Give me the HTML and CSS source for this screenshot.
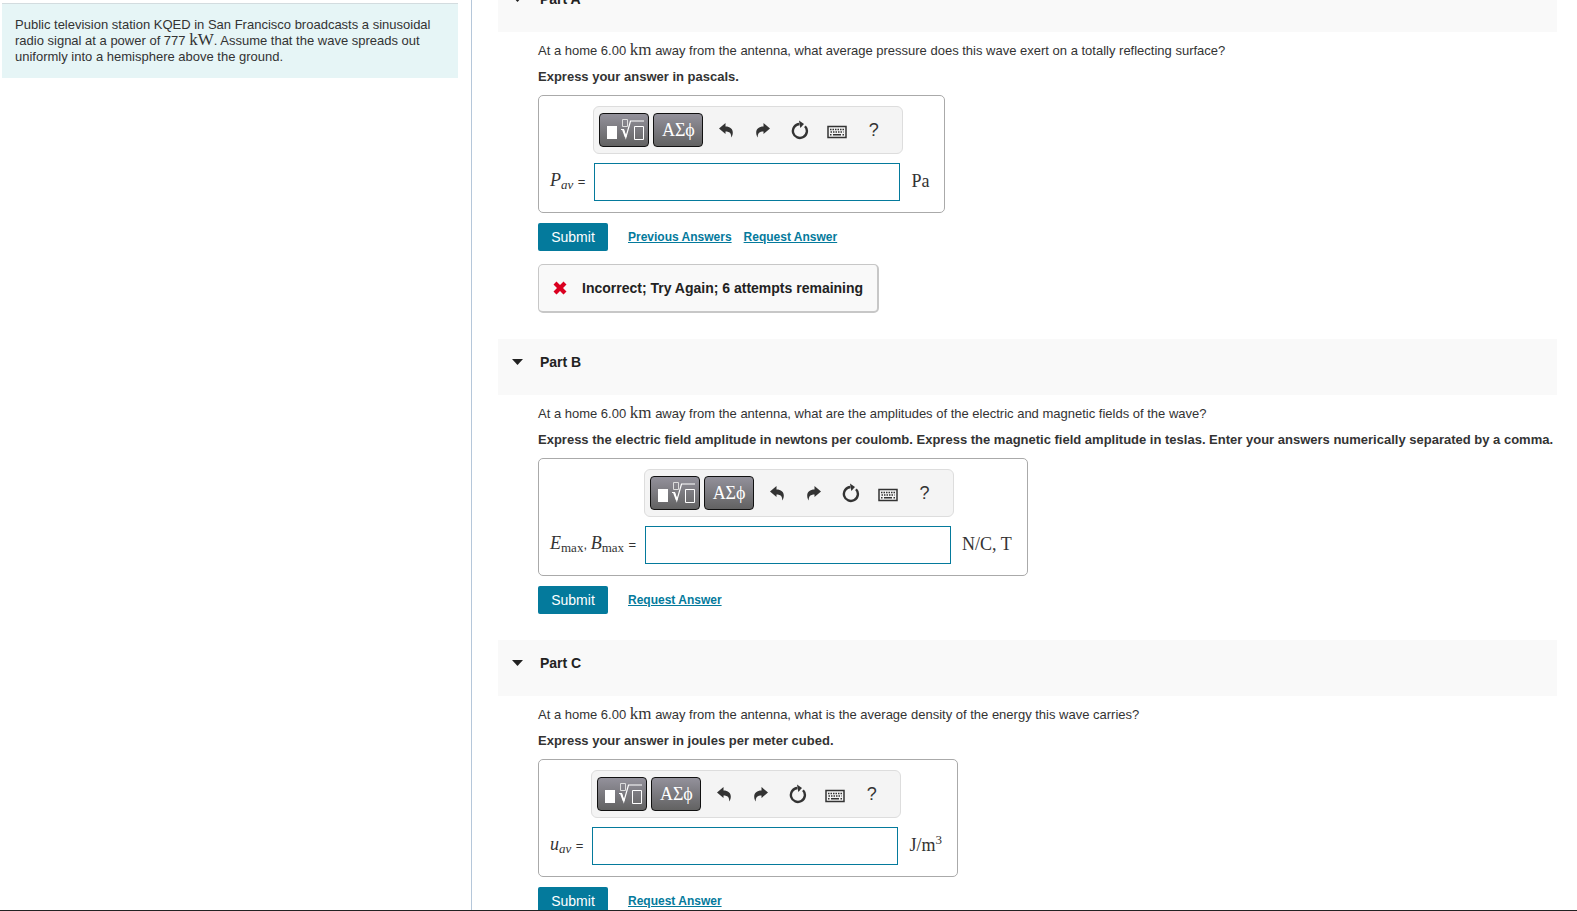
FILE: index.html
```
<!DOCTYPE html>
<html lang="en">
<head>
    <meta charset="UTF-8">
    <meta name="viewport" content="width=device-width, initial-scale=1.0">
    <title>Problem</title>
    <link rel="stylesheet" href="styles.css">
</head>
<body>
    <svg class="sprite" aria-hidden="true">
        <symbol id="icon-template" viewBox="0 0 40 26">
            <path fill="#fff" d="M3 9h10v13H3z"/>
            <path fill="none" stroke="#ddd" d="M18.500 2.500h5v7h-5z"/>
            <path fill="none" stroke="#fff" d="M30.500 9.500h9v13h-9z"/>
            <path fill="none" stroke="#fff" stroke-width="1.200" d="M17 12.500h2.500l2.300 8L26.500 4H40"/>
            <path fill="none" stroke="#fff" stroke-width="2" d="M19 12.500l2.800 7.500"/>
        </symbol>
        <symbol id="icon-undo" viewBox="0 0 16 16">
            <path d="M1 6.500L7.500 1v3.500c4.500 0 7.300 2.500 7.300 6 0 2-.6 3.700-1.600 5 .3-4-1.500-6-5.700-6V12z"/>
        </symbol>
        <symbol id="icon-redo" viewBox="0 0 16 16">
            <path d="M15 6.500L8.500 1v3.500c-4.500 0-7.300 2.500-7.300 6 0 2 .6 3.700 1.600 5-.3-4 1.500-6 5.700-6V12z"/>
        </symbol>
        <symbol id="icon-reset" viewBox="0 0 18 20">
            <path fill="none" stroke="currentColor" stroke-width="2.400" d="M14 6.200A7 7 0 1 1 8.500 4"/>
            <path d="M8 .500L13 4 9.300 8z"/>
        </symbol>
        <symbol id="icon-keyboard" viewBox="0 0 20 14">
            <path fill="none" stroke="currentColor" stroke-width="1.500" d="M1 1.500h18v11H1z"/>
            <path fill="none" stroke="currentColor" stroke-width="1.500" stroke-dasharray="1.500 1" d="M3 4.500h14M3.500 7h13"/>
            <path fill="none" stroke="currentColor" stroke-width="1.500" d="M3 9.800h1.500M6 9.800h8M15.500 9.800H17"/>
        </symbol>
        <symbol id="icon-cross" viewBox="0 0 14 14">
            <path d="M3.500.500L7 4 10.500.500l3 3L10 7l3.500 3.500-3 3L7 10l-3.500 3.500-3-3L4 7 .500 3.500z"/>
        </symbol>
        <symbol id="icon-caret" viewBox="0 0 11 6">
            <path d="M0 0h11L5.500 6z"/>
        </symbol>
    </svg>

    <div class="page">
        <aside class="intro">
            <p class="intro__text">Public television station KQED in San Francisco broadcasts a sinusoidal radio signal at a power of 777 <span class="math">kW</span>. Assume that the wave spreads out uniformly into a hemisphere above the ground.</p>
        </aside>

        <main class="parts">
            <section class="part">
                <h2 class="part__header"><svg class="part__caret"><use href="#icon-caret"/></svg>Part A</h2>
                <div class="part__body">
                    <p class="part__question">At a home 6.00 <span class="math">km</span> away from the antenna, what average pressure does this wave exert on a totally reflecting surface?</p>
                    <p class="part__hint">Express your answer in pascals.</p>
                    <div class="answer">
                        <div class="toolbar">
                            <button class="toolbar__menu" aria-label="Templates"><svg class="toolbar__template"><use href="#icon-template"/></svg></button>
                            <button class="toolbar__menu">ΑΣϕ</button>
                            <button class="toolbar__icon" aria-label="Undo"><svg width="16" height="16"><use href="#icon-undo"/></svg></button>
                            <button class="toolbar__icon" aria-label="Redo"><svg width="16" height="16"><use href="#icon-redo"/></svg></button>
                            <button class="toolbar__icon" aria-label="Reset"><svg width="18" height="20"><use href="#icon-reset"/></svg></button>
                            <button class="toolbar__icon toolbar__icon--low" aria-label="Keyboard"><svg width="20" height="14"><use href="#icon-keyboard"/></svg></button>
                            <button class="toolbar__icon">?</button>
                        </div>
                        <label class="answer__label" for="answer-a"><i>P<sub>av</sub></i> <span class="answer__equals">=</span></label>
                        <input class="answer__input" id="answer-a" type="text">
                        <span class="answer__unit">Pa</span>
                    </div>
                    <div class="actions">
                        <button class="actions__submit">Submit</button>
                        <a class="actions__link" href="#">Previous Answers</a>
                        <a class="actions__link" href="#">Request Answer</a>
                    </div>
                    <div class="feedback"><svg class="feedback__icon"><use href="#icon-cross"/></svg>Incorrect; Try Again; 6 attempts remaining</div>
                </div>
            </section>

            <section class="part">
                <h2 class="part__header"><svg class="part__caret"><use href="#icon-caret"/></svg>Part B</h2>
                <div class="part__body">
                    <p class="part__question">At a home 6.00 <span class="math">km</span> away from the antenna, what are the amplitudes of the electric and magnetic fields of the wave?</p>
                    <p class="part__hint">Express the electric field amplitude in newtons per coulomb. Express the magnetic field amplitude in teslas. Enter your answers numerically separated by a comma.</p>
                    <div class="answer">
                        <div class="toolbar">
                            <button class="toolbar__menu" aria-label="Templates"><svg class="toolbar__template"><use href="#icon-template"/></svg></button>
                            <button class="toolbar__menu">ΑΣϕ</button>
                            <button class="toolbar__icon" aria-label="Undo"><svg width="16" height="16"><use href="#icon-undo"/></svg></button>
                            <button class="toolbar__icon" aria-label="Redo"><svg width="16" height="16"><use href="#icon-redo"/></svg></button>
                            <button class="toolbar__icon" aria-label="Reset"><svg width="18" height="20"><use href="#icon-reset"/></svg></button>
                            <button class="toolbar__icon toolbar__icon--low" aria-label="Keyboard"><svg width="20" height="14"><use href="#icon-keyboard"/></svg></button>
                            <button class="toolbar__icon">?</button>
                        </div>
                        <label class="answer__label" for="answer-b"><i>E</i><sub>max</sub><span class="answer__equals">, </span> <i>B</i><sub>max</sub> <span class="answer__equals">=</span></label>
                        <input class="answer__input" id="answer-b" type="text">
                        <span class="answer__unit">N/C, T</span>
                    </div>
                    <div class="actions">
                        <button class="actions__submit">Submit</button>
                        <a class="actions__link" href="#">Request Answer</a>
                    </div>
                </div>
            </section>

            <section class="part">
                <h2 class="part__header"><svg class="part__caret"><use href="#icon-caret"/></svg>Part C</h2>
                <div class="part__body">
                    <p class="part__question">At a home 6.00 <span class="math">km</span> away from the antenna, what is the average density of the energy this wave carries?</p>
                    <p class="part__hint">Express your answer in joules per meter cubed.</p>
                    <div class="answer">
                        <div class="toolbar">
                            <button class="toolbar__menu" aria-label="Templates"><svg class="toolbar__template"><use href="#icon-template"/></svg></button>
                            <button class="toolbar__menu">ΑΣϕ</button>
                            <button class="toolbar__icon" aria-label="Undo"><svg width="16" height="16"><use href="#icon-undo"/></svg></button>
                            <button class="toolbar__icon" aria-label="Redo"><svg width="16" height="16"><use href="#icon-redo"/></svg></button>
                            <button class="toolbar__icon" aria-label="Reset"><svg width="18" height="20"><use href="#icon-reset"/></svg></button>
                            <button class="toolbar__icon toolbar__icon--low" aria-label="Keyboard"><svg width="20" height="14"><use href="#icon-keyboard"/></svg></button>
                            <button class="toolbar__icon">?</button>
                        </div>
                        <label class="answer__label" for="answer-c"><i>u<sub>av</sub></i> <span class="answer__equals">=</span></label>
                        <input class="answer__input" id="answer-c" type="text">
                        <span class="answer__unit">J/m<sup>3</sup></span>
                    </div>
                    <div class="actions">
                        <button class="actions__submit">Submit</button>
                        <a class="actions__link" href="#">Request Answer</a>
                    </div>
                </div>
            </section>
        </main>
    </div>
</body>
</html>
```
FILE: styles.css
```
* {
    box-sizing: border-box;
}
body {
    margin: 0;
    font-family: "Liberation Sans", Arial, sans-serif;
    font-size: 13px;
    line-height: 16px;
    color: #333;
    background-color: #fff;
}
p,
h2 {
    margin: 0;
}
button {
    padding: 0;
    border: none;
    font-family: inherit;
    cursor: pointer;
}
svg {
    flex: none;
    fill: currentColor;
}
sub,
sup {
    font-size: 13px;
    line-height: 0;
}
sub {
    vertical-align: -3px;
}
sup {
    vertical-align: 7px;
}
.sprite {
    display: none;
}
.math {
    font-family: "Liberation Serif", "Times New Roman", serif;
    font-size: 17px;
    line-height: 0;
}
.page {
    display: flex;
    height: 100vh;
    overflow: hidden;
    border-bottom: 1px solid #222;
}
.intro {
    flex: 0 0 472px;
    padding: 3px 13px 0 2px;
    border-right: 1px solid #b5c7da;
}
.intro__text {
    padding: 13px;
    border-top: 1px solid #d3dcdf;
    background-color: #e6f5f6;
}

/* parts */
.parts {
    flex: 1;
    margin-top: -24px;
    padding: 0 20px 0 26px;
}
.part__header {
    display: flex;
    gap: 17px;
    height: 56px;
    padding: 15px 14px;
    font-size: 14px;
    color: #222;
    background-color: #f9f9f9;
}
.part__caret {
    width: 11px;
    height: 6px;
    margin-top: 5px;
}
.part__body {
    padding: 11px 0 26px 40px;
}
.part__question {
    margin-bottom: 10px;
}
.part__hint {
    margin-bottom: 10px;
    font-weight: bold;
    white-space: nowrap;
}

/* answer box */
.answer {
    display: inline-grid;
    grid-template-columns: auto 310px auto;
    align-items: center;
    row-gap: 9px;
    padding: 10px 15px 11px 11px;
    border: 1px solid #aaa;
    border-radius: 5px;
    vertical-align: top;
}
.answer__label,
.answer__unit {
    padding-bottom: 2px;
    font-family: "Liberation Serif", "Times New Roman", serif;
    font-size: 18px;
    line-height: 20px;
}
.answer__label {
    grid-column: 1;
    padding-right: 8px;
}
.answer__equals {
    font-family: "Liberation Sans", Arial, sans-serif;
    font-size: 13px;
}
.answer__input {
    width: 306px;
    height: 38px;
    margin-left: 1px;
    padding: 0 8px;
    border: 1px solid #047a9c;
    font-size: 18px;
    background-color: #fff;
}
.answer__unit {
    padding-left: 8px;
}
.toolbar {
    grid-column: 2;
    display: flex;
    align-items: center;
    height: 48px;
    padding: 0 5px;
    border: 1px solid #ddd;
    border-radius: 6px;
    background-color: #f4f4f4;
}
.toolbar__menu {
    display: flex;
    align-items: center;
    justify-content: center;
    width: 50px;
    height: 34px;
    margin-right: 4px;
    border: 1px solid #111;
    border-radius: 4px;
    font-family: "Liberation Serif", "Times New Roman", serif;
    font-size: 18px;
    color: #fff;
    background-image: linear-gradient(#93919b, #626262);
}
.toolbar__template {
    width: 40px;
    height: 26px;
}
.toolbar__icon {
    display: flex;
    align-items: center;
    justify-content: center;
    width: 37px;
    height: 34px;
    font-size: 18px;
    color: #333;
    background: none;
}
.toolbar__icon--low {
    padding-top: 4px;
}

/* submit row */
.actions {
    display: flex;
    align-items: center;
    gap: 12px;
    margin-top: 10px;
}
.actions__submit {
    width: 70px;
    height: 28px;
    margin-right: 8px;
    border-radius: 2px;
    font-size: 14px;
    color: #fff;
    background-color: #047a9c;
}
.actions__link {
    font-size: 12px;
    font-weight: bold;
    color: #047a9c;
}
.feedback {
    display: flex;
    align-items: center;
    gap: 15px;
    width: fit-content;
    height: 49px;
    margin-top: 13px;
    padding: 0 14px;
    border: 1px solid #c7c7c7;
    border-right-width: 2px;
    border-bottom-width: 2px;
    border-radius: 5px;
    font-size: 14px;
    font-weight: bold;
    color: #222;
    background-color: #f9f9f9;
}
.feedback__icon {
    width: 14px;
    height: 14px;
    color: #db0020;
}
```
